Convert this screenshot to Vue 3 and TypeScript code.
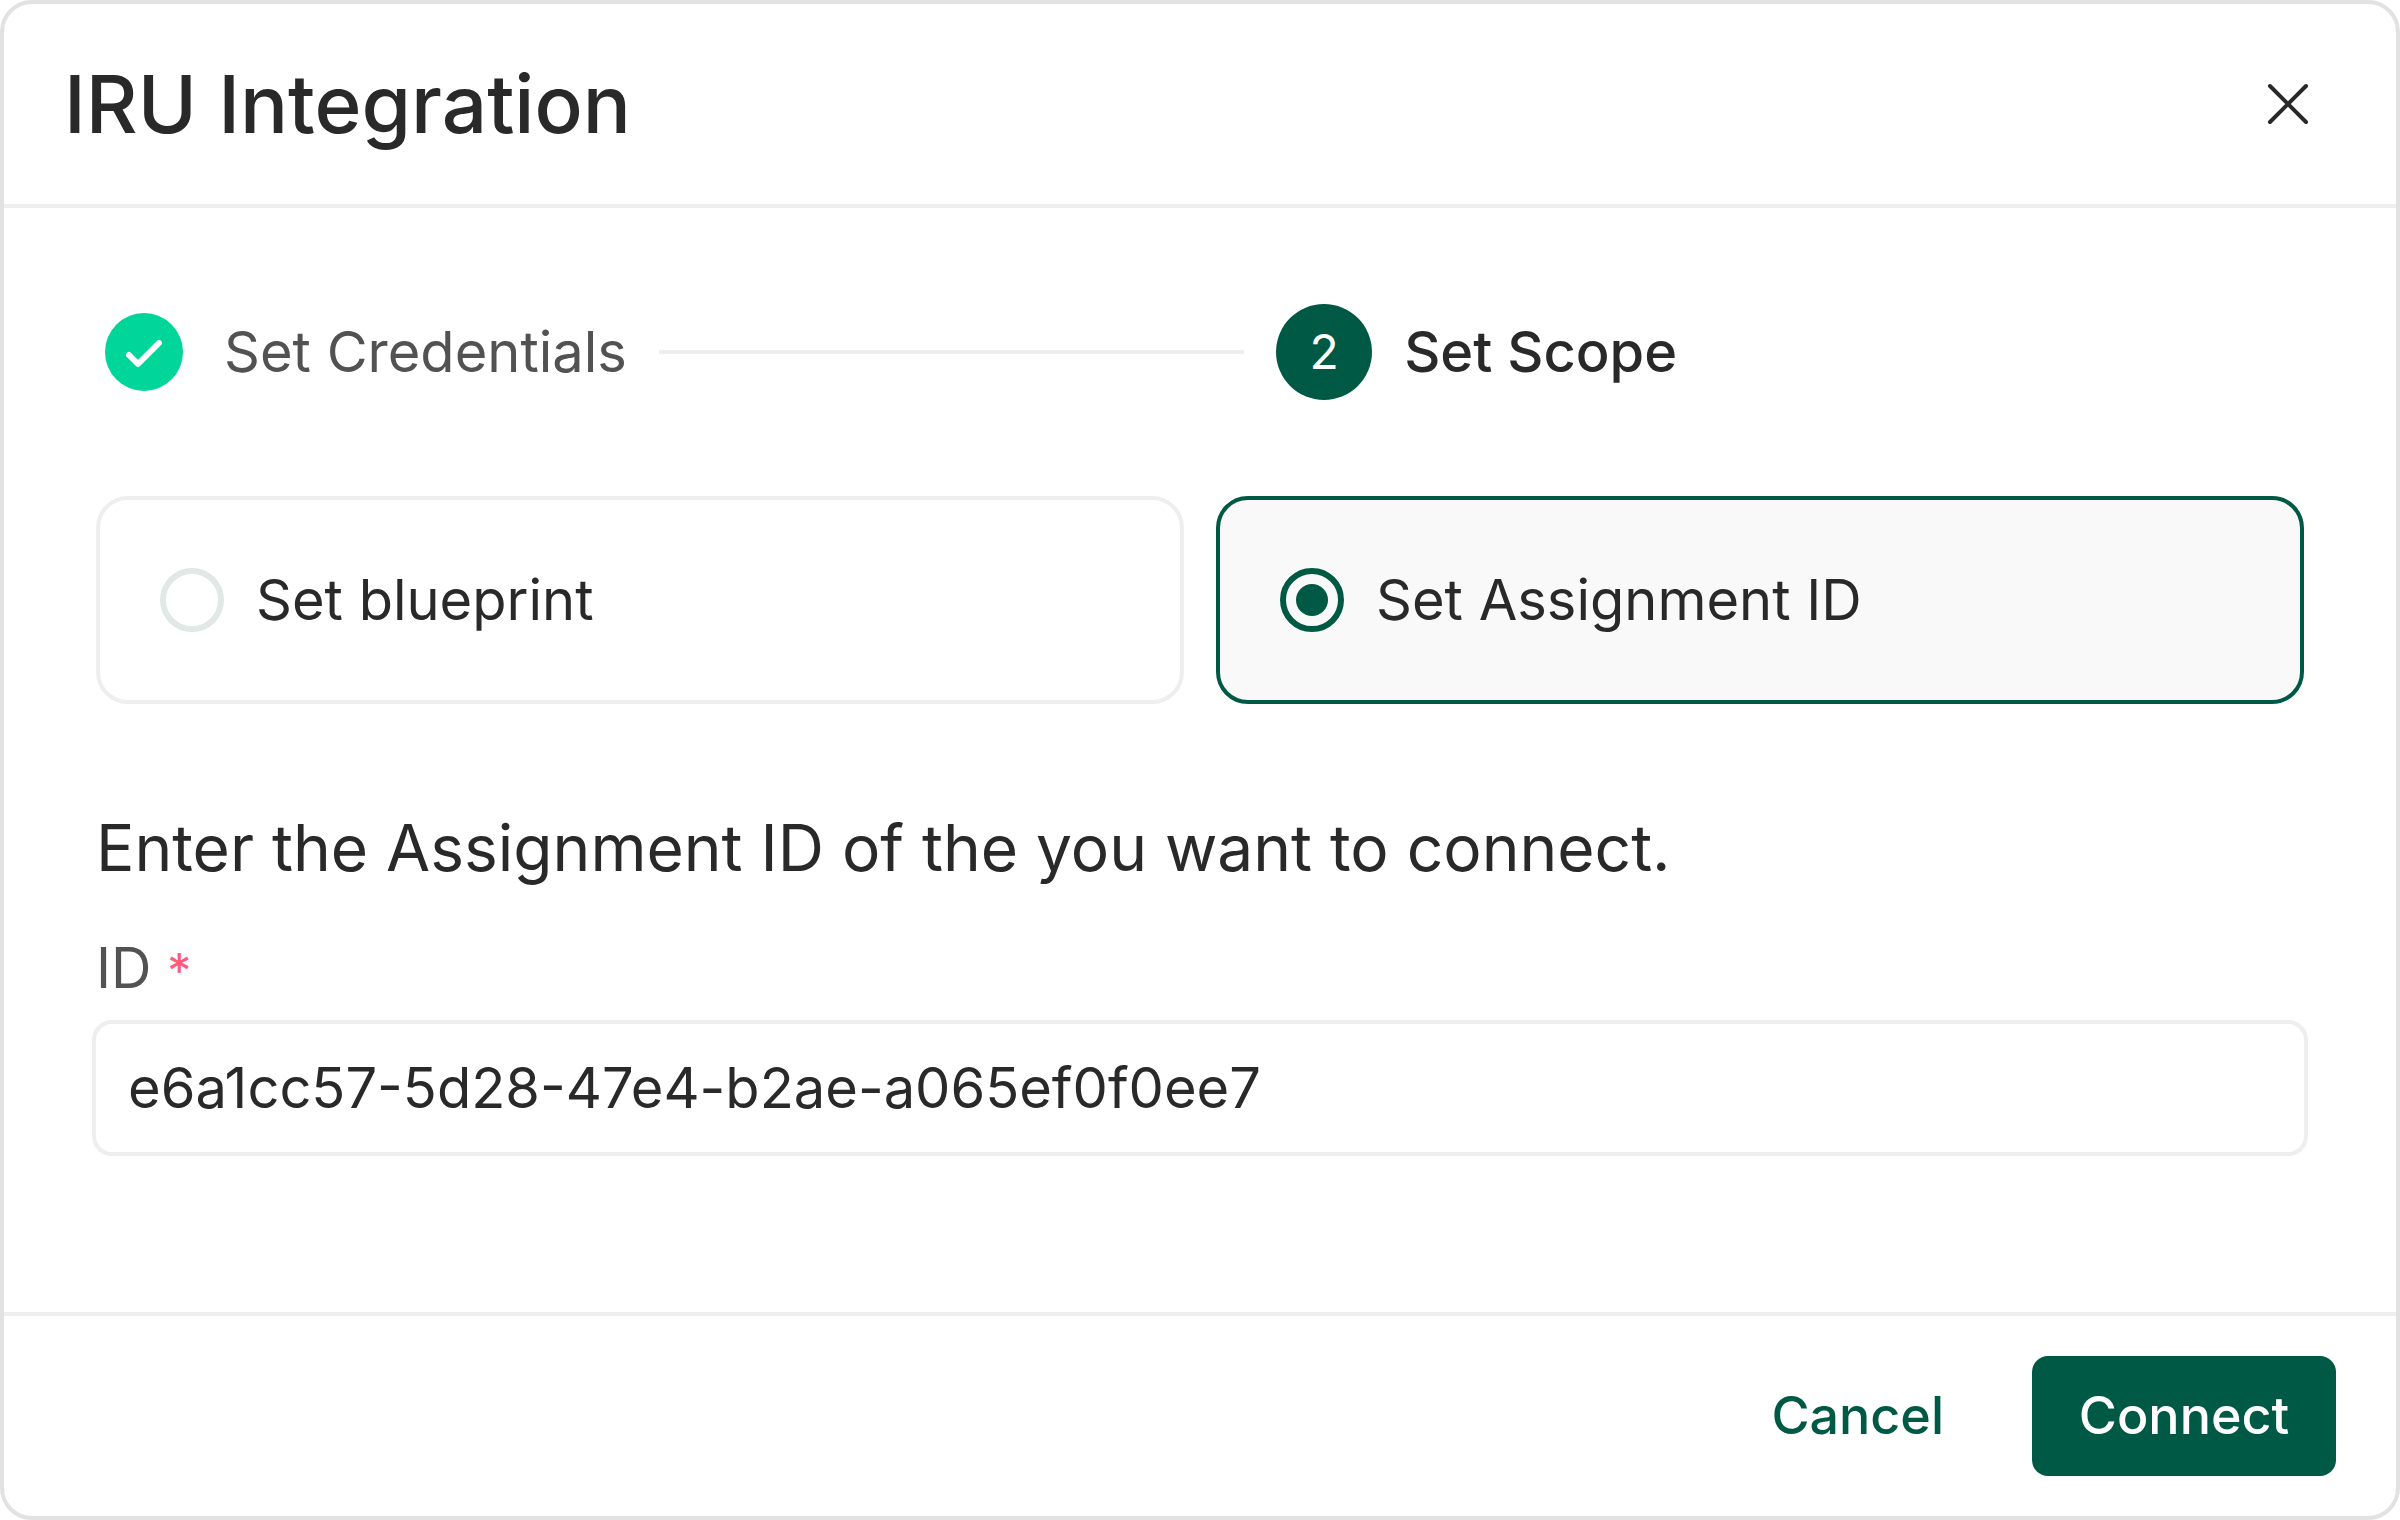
<script setup lang="ts">
import { ref } from 'vue'

type Scope = 'blueprint' | 'assignment'

interface ScopeOption {
  value: Scope
  label: string
}

const options: ScopeOption[] = [
  { value: 'blueprint', label: 'Set blueprint' },
  { value: 'assignment', label: 'Set Assignment ID' },
]

const scope = ref<Scope>('assignment')
const assignmentId = ref('e6a1cc57-5d28-47e4-b2ae-a065ef0f0ee7')
</script>

<template>
  <form class="dialog" role="dialog" aria-labelledby="dialog-title" @submit.prevent>
    <header class="header">
      <h1 id="dialog-title" class="title">IRU Integration</h1>
      <button class="close" type="button" aria-label="Close">
        <svg viewBox="0 0 96 96" width="96" height="96" fill="none" stroke="currentColor" stroke-width="4" stroke-linecap="round">
          <path d="M30 30 66 66M66 30 30 66" />
        </svg>
      </button>
    </header>

    <main class="body">
      <ol class="steps">
        <li class="step step-done">
          <svg viewBox="0 0 96 96" width="96" height="96" aria-hidden="true">
            <circle cx="48" cy="48" r="39" fill="#00d59a" />
            <path d="M33 51 42 60 63 39" fill="none" stroke="#fff" stroke-width="6" stroke-linecap="round" stroke-linejoin="round" />
          </svg>
          <span>Set Credentials</span>
          <span class="connector"></span>
        </li>
        <li class="step step-current" aria-current="step">
          <span class="number">2</span>
          <span>Set Scope</span>
        </li>
      </ol>

      <div class="cards" role="radiogroup" aria-label="Scope">
        <label
          v-for="option in options"
          :key="option.value"
          class="card"
          :class="{ selected: scope === option.value }"
        >
          <input v-model="scope" class="radio" type="radio" name="scope" :value="option.value" />
          <span>{{ option.label }}</span>
        </label>
      </div>

      <p class="hint">Enter the Assignment ID of the you want to connect.</p>
      <label class="field-label" for="assignment-id">ID <span class="required">*</span></label>
      <input id="assignment-id" v-model="assignmentId" class="field" type="text" spellcheck="false" required />
    </main>

    <footer class="footer">
      <button class="button cancel" type="button">Cancel</button>
      <button class="button connect" type="submit">Connect</button>
    </footer>
  </form>
</template>

<style>
body {
  margin: 0;
  background: #fff;
}
</style>

<style scoped>
.dialog,
.dialog * {
  box-sizing: border-box;
}

.dialog {
  display: flex;
  flex-direction: column;
  min-height: 100vh;
  border: 4px solid #e1e2e4;
  border-radius: 32px;
  background: #fff;
  color: #292929;
  font-family: Inter, "Liberation Sans", sans-serif;
  font-optical-sizing: none;
  font-size: 56px;
  line-height: 80px;
}

.header {
  display: flex;
  align-items: center;
  justify-content: space-between;
  padding: 52px 60px;
  border-bottom: 4px solid #eee;
}

.title {
  margin: 0;
  font-size: 80px;
  font-weight: 500;
  line-height: 96px;
}

button {
  border: 0;
  background: none;
  font: inherit;
  cursor: pointer;
}

.close {
  display: flex;
  padding: 0;
  color: #292929;
}

.body {
  display: flex;
  flex: 1;
  flex-direction: column;
  padding: 96px 92px;
}

.steps {
  display: grid;
  grid-template-columns: 52% 1fr;
  gap: 32px;
  margin: 0 0 96px;
  padding: 0;
  list-style: none;
}

.step {
  display: flex;
  align-items: center;
  gap: 32px;
  white-space: nowrap;
}

.step-done {
  color: #525252;
}

.step-current {
  font-weight: 500;
}

.connector {
  flex: 1;
  height: 4px;
  background: #eee;
}

.number {
  width: 96px;
  border-radius: 50%;
  background: #005944;
  color: #fff;
  font-size: 48px;
  font-weight: 400;
  line-height: 96px;
  text-align: center;
}

.cards {
  display: grid;
  grid-template-columns: 1fr 1fr;
  gap: 32px;
}

.card {
  display: flex;
  align-items: center;
  gap: 32px;
  padding: 60px;
  border: 4px solid #eee;
  border-radius: 32px;
  cursor: pointer;
}

.card.selected {
  border-color: #005944;
  background: #f9f9f9;
}

.radio {
  display: grid;
  place-items: center;
  width: 64px;
  height: 64px;
  margin: 0;
  border: 6px solid #e1e8e6;
  border-radius: 50%;
  appearance: none;
}

.radio:checked {
  border-color: #005944;
}

.radio:checked::before {
  width: 32px;
  height: 32px;
  border-radius: 50%;
  background: #005944;
  content: "";
}

.hint {
  margin: 96px 0 32px;
  font-size: 64px;
  line-height: 96px;
}

.field-label {
  margin-bottom: 12px;
  color: #525252;
}

.required {
  color: #ff5a79;
  font-size: 48px;
  line-height: 48px;
}

.field {
  height: 136px;
  margin: 0 -4px;
  padding: 0 32px;
  border: 4px solid #eee;
  border-radius: 20px;
  background: #fff;
  color: inherit;
  font: inherit;
  outline: 0;
}

.footer {
  display: flex;
  justify-content: flex-end;
  gap: 48px;
  padding: 40px 60px;
  border-top: 4px solid #eee;
}

.button {
  padding: 20px 40px;
  border-radius: 16px;
  font-size: 52px;
  font-weight: 500;
}

.cancel {
  color: #005944;
}

.connect {
  min-width: 304px;
  background: #005944;
  color: #fff;
}
</style>
